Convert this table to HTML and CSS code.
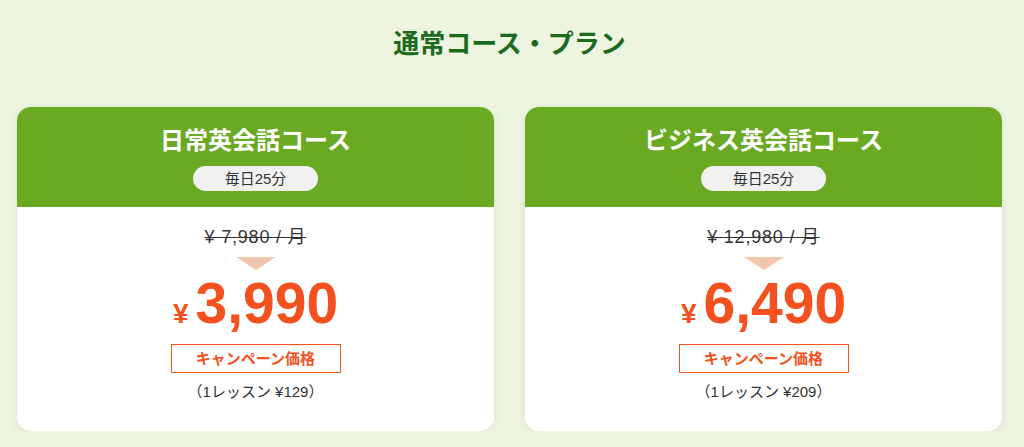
FILE: index.html
```html
<!DOCTYPE html>
<html lang="ja">
<head>
<meta charset="utf-8">
<link rel="stylesheet" href="styles.css">
</head>
<body>
<section class="plans">
  <h2 class="plans-title">通常コース・プラン</h2>
  <div class="cards">
    <div class="card">
      <div class="card-head">
        <h3 class="card-name">日常英会話コース</h3>
        <span class="pill">毎日25分</span>
      </div>
      <div class="card-body">
        <p class="old-price">¥ 7,980 / 月</p>
        <div class="arrow"></div>
        <p class="price"><span class="yen">¥</span><span class="amount">3,990</span></p>
        <p class="campaign">キャンペーン価格</p>
        <p class="note">（1レッスン ¥129）</p>
      </div>
    </div>
    <div class="card">
      <div class="card-head">
        <h3 class="card-name">ビジネス英会話コース</h3>
        <span class="pill">毎日25分</span>
      </div>
      <div class="card-body">
        <p class="old-price">¥ 12,980 / 月</p>
        <div class="arrow"></div>
        <p class="price"><span class="yen">¥</span><span class="amount">6,490</span></p>
        <p class="campaign">キャンペーン価格</p>
        <p class="note">（1レッスン ¥209）</p>
      </div>
    </div>
  </div>
</section>
</body>
</html>
```
FILE: styles.css
```css
* { box-sizing: border-box; }
html, body { margin: 0; padding: 0; }
body {
  background: #edf5e1;
  font-family: "Liberation Sans", "Noto Sans CJK JP", sans-serif;
  color: #333;
}
.plans { padding: 25px 22px 0 17px; }
.plans-title {
  margin: 0;
  text-align: center;
  font-family: "Noto Sans CJK JP", sans-serif;
  font-size: 26px;
  line-height: 34px;
  font-weight: 700;
  color: #1c6a1c;
}
.cards {
  display: flex;
  gap: 31px;
  margin-top: 48px;
}
.card {
  flex: 1;
  background: #fff;
  border-radius: 14px;
  overflow: hidden;
  box-shadow: 0 2px 10px rgba(0,0,0,0.08);
}
.card-head {
  background: #6aaa23;
  height: 100px;
  display: flex;
  flex-direction: column;
  align-items: center;
  padding-top: 15px;
}
.card-name {
  margin: 0;
  color: #fff;
  font-family: "Noto Sans CJK JP", sans-serif;
  font-size: 24px;
  line-height: 34px;
  font-weight: 700;
}
.pill {
  margin-top: 10px;
  width: 125px;
  height: 25px;
  border-radius: 13px;
  background: #f1f1f1;
  color: #333;
  font-size: 15px;
  line-height: 25px;
  text-align: center;
}
.card-body {
  display: flex;
  flex-direction: column;
  align-items: center;
  padding: 17px 0 28px;
}
.old-price {
  margin: 0;
  font-size: 18px;
  letter-spacing: 0.8px;
  line-height: 26px;
  text-decoration: line-through;
  color: #333;
}
.arrow {
  margin-top: 7px;
  width: 0; height: 0;
  border-left: 20px solid transparent;
  border-right: 20px solid transparent;
  border-top: 13px solid #f2c6ab;
}
.price {
  margin: 5px 0 0;
  color: #f4511e;
  font-weight: 700;
  display: flex;
  align-items: baseline;
  gap: 7px;
  line-height: 56px;
}
.yen { font-size: 28px; line-height: 1; }
.amount { font-size: 57px; }
.campaign {
  margin: 13px 0 0;
  width: 170px;
  height: 29px;
  border: 1px solid #f4511e;
  color: #f4511e;
  font-size: 15px;
  font-weight: 700;
  line-height: 27px;
  text-align: center;
}
.note {
  margin: 8px 0 0;
  font-size: 15px;
  line-height: 22px;
  color: #333;
}
```
